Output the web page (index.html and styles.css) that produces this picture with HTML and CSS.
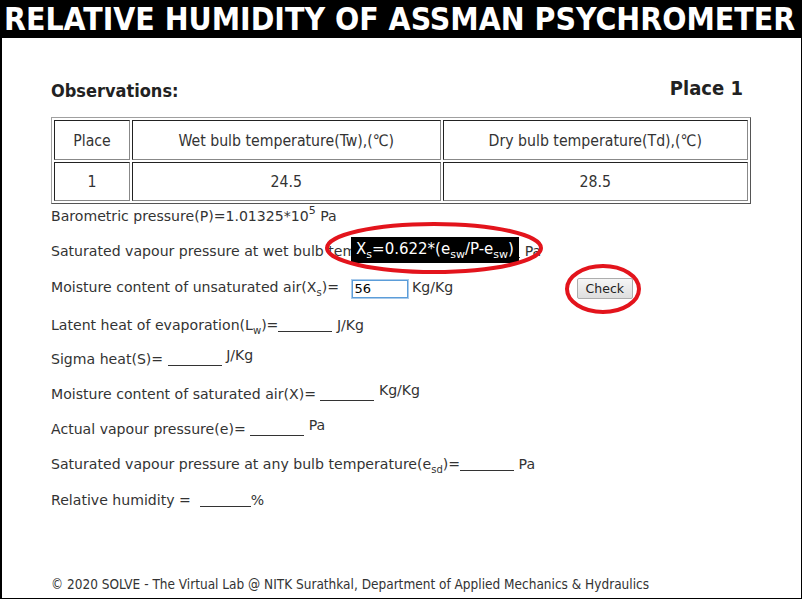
FILE: index.html
```html
<!DOCTYPE html>
<html>
<head>
<meta charset="utf-8">
<link rel="stylesheet" href="styles.css">
</head>
<body>
<div class="frame">
  <header class="title">RELATIVE HUMIDITY OF ASSMAN PSYCHROMETER</header>
  <main class="content">
    <div class="obs-row">
      <h2 class="obs">Observations:</h2>
      <span class="place">Place 1</span>
    </div>
    <table class="data">
      <tr class="head"><td class="c1">Place</td><td>Wet bulb temperature(Tw),(℃)</td><td>Dry bulb temperature(Td),(℃)</td></tr>
      <tr class="vals"><td class="c1">1</td><td>24.5</td><td>28.5</td></tr>
    </table>
    <div class="lines">
      <p class="l h35">Barometric pressure(P)=1.01325*10<sup>5</sup> Pa</p>
      <p class="l h37">Saturated vapour pressure at wet bulb temperature(e<sub>sw</sub>)= <span class="blank"></span> Pa</p>
      <p class="l h38">Moisture content of unsaturated air(X<sub>s</sub>)= <input class="inp" value="56"> Kg/Kg <button class="check">Check</button></p>
      <p class="l h34">Latent heat of evaporation(L<sub>w</sub>)=<span class="blank"></span> J/Kg</p>
      <p class="l h35">Sigma heat(S)= <span class="blank"></span> <span class="up">J/Kg</span></p>
      <p class="l h35">Moisture content of saturated air(X)= <span class="blank"></span> <span class="up">Kg/Kg</span></p>
      <p class="l h35">Actual vapour pressure(e)= <span class="blank"></span> <span class="up">Pa</span></p>
      <p class="l h36">Saturated vapour pressure at any bulb temperature(e<sub>sd</sub>)=<span class="blank"></span> Pa</p>
      <p class="l h35">Relative humidity = &nbsp;<span class="blank short"></span>%</p>
    </div>
    <div class="tip">X<sub>s</sub>=0.622*(e<sub>sw</sub>/P-e<sub>sw</sub>)</div>
    <svg class="ring ring-tip" width="226" height="56" viewBox="0 0 226 56"><ellipse cx="113" cy="28" rx="107" ry="24" fill="none" stroke="#e3141c" stroke-width="4"/></svg>
    <svg class="ring ring-btn" width="80" height="54" viewBox="0 0 80 54"><ellipse cx="40" cy="27" rx="36" ry="23" fill="none" stroke="#e3141c" stroke-width="4"/></svg>
  </main>
  <footer class="foot">© 2020 SOLVE - The Virtual Lab @ NITK Surathkal, Department of Applied Mechanics &amp; Hydraulics</footer>
</div>
</body>
</html>
```
FILE: styles.css
```css
html, body { margin: 0; padding: 0; background: #fff; }
.frame {
  width: 799px;
  height: 598px;
  border-left: 2px solid #000;
  border-right: 1px solid #000;
  border-bottom: 1px solid #000;
  display: flex;
  flex-direction: column;
  font-family: "DejaVu Sans", Verdana, sans-serif;
  color: #333;
}
.title {
  background: #000;
  color: #fff;
  height: 38px;
  font-family: "DejaVu Sans Condensed", "DejaVu Sans", sans-serif;
  font-weight: bold;
  font-size: 31.7px;
  line-height: 38px;
  padding-left: 2px;
  white-space: nowrap;
  overflow: hidden;
}
.content {
  position: relative;
  flex: 1;
  padding: 0 48px 0 49px;
}
.obs-row {
  display: flex;
  justify-content: space-between;
  align-items: baseline;
  margin-top: 40px;
  height: 38px;
}
.obs {
  margin: 0;
  font-family: "DejaVu Sans Condensed", "DejaVu Sans", sans-serif;
  font-size: 18px;
  font-weight: bold;
  color: #222;
}
.place {
  font-family: "DejaVu Sans Condensed", "DejaVu Sans", sans-serif;
  font-size: 20px;
  font-weight: bold;
  color: #222;
  margin-right: 10px;
  position: relative;
  top: -2px;
}
.data {
  width: 700px;
  border-collapse: separate;
  border-spacing: 2px;
  border: 1px solid;
  border-color: #a0a0a0 #555 #555 #a0a0a0;
  margin-top: 1px;
  font-family: "DejaVu Sans Condensed", "DejaVu Sans", sans-serif;
  font-size: 15.7px;
  color: #333;
}
.data td {
  border: 1px solid;
  border-color: #222 #888 #888 #222;
  text-align: center;
  padding: 0;
}
.data .c1 { width: 74px; }
.data tr.head td { height: 38px; }
.data tr.vals td { height: 37px; }
.lines { font-size: 14.1px; margin-top: 3px; }
.l {
  margin: 0;
  line-height: 18px;
  white-space: nowrap;
}
.h34 { height: 34px; }
.h35 { height: 35px; }
.h36 { height: 36px; }
.h37 { height: 36px; }
.h38 { height: 38px; }
.l sup { font-size: 11px; line-height: 0; vertical-align: 7px; }
.l sub { font-size: 10px; line-height: 0; vertical-align: -4px; }
.blank {
  display: inline-block;
  width: 54px;
  border-bottom: 1px solid #333;
  vertical-align: -2px;
  height: 1px;
}
.blank.short { width: 51px; }
.up { position: relative; top: -4px; }
.inp {
  width: 50px;
  height: 14px;
  padding: 1px 2px;
  border: 1px solid #5b9dd9;
  box-shadow: 0 0 0 1px #aacbeb;
  font-family: "DejaVu Sans", sans-serif;
  font-size: 13px;
  color: #000;
  margin-left: 8px;
  vertical-align: -1px;
}
.check {
  margin-left: 119px;
  font-family: "DejaVu Sans", sans-serif;
  font-size: 12.5px;
  color: #222;
  background: linear-gradient(#f6f6f6, #dedede);
  border: 1px solid #adadad;
  border-radius: 2px;
  padding: 0 8px;
  height: 21px;
  vertical-align: -1px;
}
.tip {
  position: absolute;
  left: 349px;
  top: 199px;
  width: 168px;
  height: 26px;
  background: #000;
  color: #fff;
  font-size: 15px;
  line-height: 24px;
  text-align: center;
  white-space: nowrap;
}
.tip sub { font-size: 11px; line-height: 0; vertical-align: -4px; }
.ring { position: absolute; }
.ring-tip { left: 319px; top: 182px; }
.ring-btn { left: 561px; top: 224px; }
.foot {
  height: 24px;
  line-height: 20px;
  padding-left: 49px;
  font-family: "DejaVu Sans Condensed", "DejaVu Sans", sans-serif;
  font-size: 13.5px;
  color: #333;
}
```
